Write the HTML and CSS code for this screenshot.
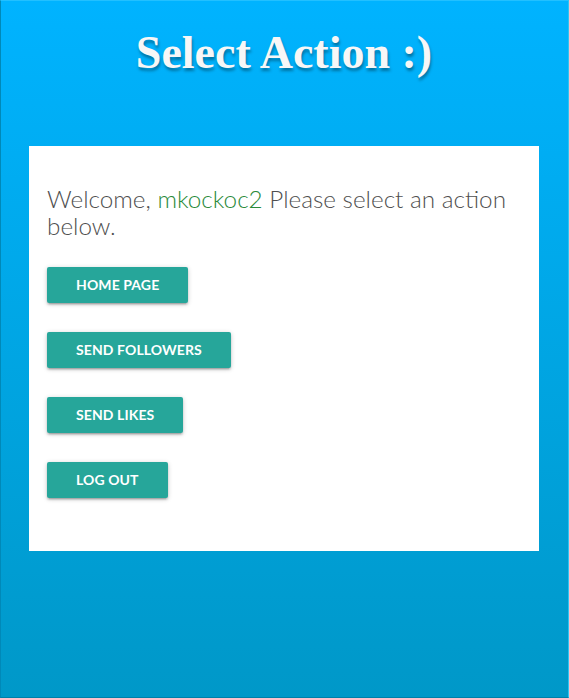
FILE: index.html
```html
<!DOCTYPE html>
<html>
<head>
<meta charset="utf-8">
<link rel="stylesheet" href="styles.css">
</head>
<body>
<div class="page">
  <h1 class="title">Select Action :)</h1>
  <div class="card">
    <p class="welcome">Welcome, <span class="user">mkockoc2</span> Please select an action below.</p>
    <div class="actions">
      <a class="btn">Home Page</a>
      <a class="btn">Send Followers</a>
      <a class="btn">Send Likes</a>
      <a class="btn">Log Out</a>
    </div>
  </div>
</div>
</body>
</html>
```
FILE: styles.css
```css
html, body {
  margin: 0;
  padding: 0;
  height: 100%;
}
body {
  font-family: Lato, "Liberation Sans", sans-serif;
}
.page {
  box-sizing: border-box;
  height: 698px;
  background: linear-gradient(to bottom, #00b3ff 0%, #0098c8 100%);
  border-top: 1px solid #22c0ff;
  border-left: 1px solid #0089b8;
  border-right: 1px solid #30c4f0;
  border-bottom: 1px solid #007fa8;
  padding: 0 29px 0 28px;
  display: flex;
  flex-direction: column;
}
.title {
  margin: 27px 0 0;
  height: 118px;
  text-align: center;
  font-family: "Liberation Serif", serif;
  font-weight: bold;
  font-size: 46px;
  line-height: 50px;
  color: #f7f7f7;
  text-shadow: 1px 3px 3px rgba(0, 0, 0, 0.35);
}
.card {
  background: #fff;
  height: 405px;
  box-sizing: border-box;
  padding: 39px 18px 0 18px;
}
.welcome {
  margin: 0;
  font-weight: 300;
  font-size: 24.3px;
  line-height: 27px;
  color: #4f4f4f;
}
.user {
  color: #2a8a3a;
}
.actions {
  margin-top: 28px;
  display: flex;
  flex-direction: column;
  align-items: flex-start;
  gap: 29px;
}
.btn {
  display: inline-block;
  height: 36px;
  line-height: 36px;
  padding: 0 29px;
  background: #26a69a;
  color: #fff;
  border-radius: 2px;
  font-weight: bold;
  font-size: 14px;
  letter-spacing: 0.1px;
  text-transform: uppercase;
  box-shadow: 0 2px 2px 0 rgba(0,0,0,0.14), 0 3px 1px -2px rgba(0,0,0,0.12), 0 1px 5px 0 rgba(0,0,0,0.2);
}
```
